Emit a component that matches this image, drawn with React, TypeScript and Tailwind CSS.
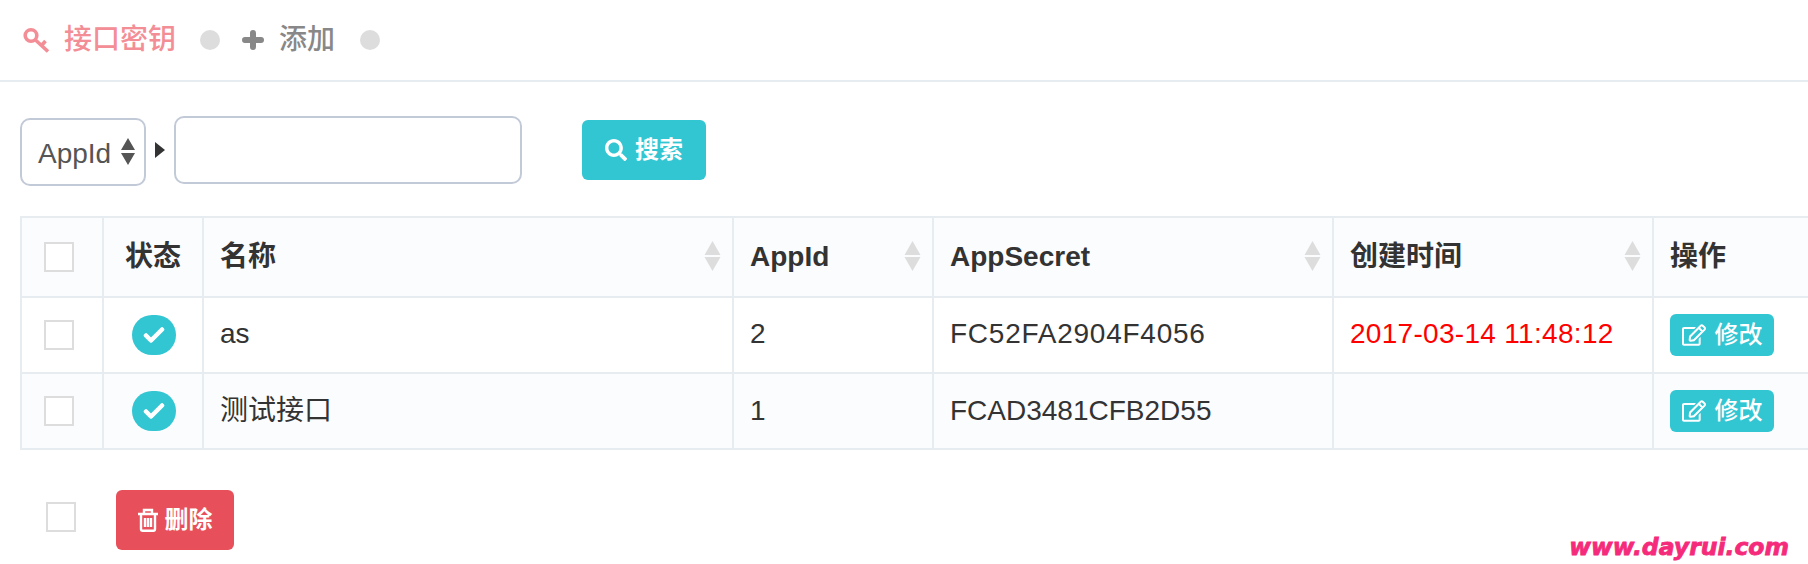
import { FaRegEdit, FaSearch } from 'react-icons/fa';

const font = 'font-["Liberation_Sans","Noto_Sans_CJK_SC",sans-serif]';

function Checkbox({ className = '' }: { className?: string }) {
  return <span className={`block h-[30px] w-[30px] border-2 border-[#dddddd] bg-white ${className}`} />;
}

function KeyIcon() {
  return (
    <svg width="28" height="26" viewBox="0 0 28 26" fill="none" stroke="#f38d96" strokeWidth="3.6">
      <circle cx="8" cy="8.5" r="5.8" />
      <path d="M12.5 13l12.5 11.5M18.5 18.5l4-4.5" />
    </svg>
  );
}

function PlusIcon() {
  return (
    <svg width="22" height="20" viewBox="0 0 22 20" className="ml-[22px]" fill="none" stroke="#888888" strokeWidth="6" strokeLinecap="round">
      <path d="M3 10h16M11 3v14" />
    </svg>
  );
}

function TrashIcon() {
  return (
    <svg width="20" height="24" viewBox="0 0 20 24" fill="none" stroke="white" strokeWidth="2.4">
      <path d="M0 6h20M6 6V2h8v4M3 6v15c0 1 .6 1.8 1.6 1.8h10.8c1 0 1.6-.8 1.6-1.8V6M7 10v9M10 10v9M13 10v9" />
    </svg>
  );
}

function SortIcon() {
  return (
    <svg width="17" height="30" viewBox="0 0 17 30" className="absolute right-[11px] top-[23px]" fill="#dddddd">
      <path d="M8.5 0l8 14H.5zM.5 16h16l-8 14z" />
    </svg>
  );
}

function StatusIcon() {
  return (
    <span className="mx-auto flex h-[40px] w-[44px] items-center justify-center rounded-full bg-[#32c5d2]">
      <svg width="22" height="18" viewBox="0 0 22 18" fill="none" stroke="white" strokeWidth="4.5" strokeLinecap="round" strokeLinejoin="round">
        <path d="M3 9.5l5 5 11-11" />
      </svg>
    </span>
  );
}

function EditButton() {
  return (
    <button className="flex h-[42px] w-[104px] items-center justify-center gap-[9px] rounded-[6px] bg-[#32c5d2] text-[24px] font-medium text-white">
      <FaRegEdit size={24} />
      修改
    </button>
  );
}

const cell = 'relative border-2 border-[#e7ecf1] pl-[16px] pr-[14px] align-middle';
const boxCell = 'relative border-2 border-[#e7ecf1] pl-[22px] align-middle';

export default function App() {
  return (
    <div className={`h-[564px] w-[1808px] overflow-hidden bg-white text-[#333333] ${font}`}>
      <div className="flex h-[82px] items-center border-b-2 border-[#e7ecf1] pl-[23px] text-[28px] font-medium">
        <KeyIcon />
        <span className="ml-[13px] text-[#f38d96]">接口密钥</span>
        <span className="ml-[24px] h-[20px] w-[20px] rounded-full bg-[#dddddd]" />
        <PlusIcon />
        <span className="ml-[15px] text-[#888888]">添加</span>
        <span className="ml-[25px] h-[20px] w-[20px] rounded-full bg-[#dddddd]" />
      </div>

      <div className="flex items-center pl-[20px] pt-[32px]">
        <div className="mt-[4px] flex h-[68px] w-[126px] items-center rounded-[10px] border-2 border-[#c2cad8] pl-[16px] text-[28px] text-[#555555]">
          <span className="pt-[4px]">AppId</span>
          <svg width="14" height="28" viewBox="0 0 14 28" className="ml-[10px]" fill="#555555">
            <path d="M7 0l7 12H0zM0 15h14L7 27z" />
          </svg>
        </div>
        <svg width="10" height="16" viewBox="0 0 10 16" className="ml-[9px]" fill="#333333">
          <path d="M0 0l10 8-10 8z" />
        </svg>
        <div className="ml-[9px] h-[68px] w-[348px] rounded-[10px] border-2 border-[#c2cad8]" />
        <button className="ml-[60px] flex h-[60px] w-[124px] items-center justify-center gap-[8px] rounded-[6px] bg-[#32c5d2] text-[24px] font-bold text-white">
          <FaSearch size={22} />
          搜索
        </button>
      </div>

      <div className="mt-[30px] pl-[20px]">
        <table className="w-[1832px] table-fixed border-collapse text-left text-[28px]">
          <colgroup>
            <col className="w-[82px]" />
            <col className="w-[100px]" />
            <col className="w-[530px]" />
            <col className="w-[200px]" />
            <col className="w-[400px]" />
            <col className="w-[320px]" />
            <col className="w-[200px]" />
          </colgroup>
          <thead>
            <tr className="h-[80px] bg-[#fbfcfd] font-bold">
              <th className={boxCell}>
                <Checkbox />
              </th>
              <th className="relative border-2 border-[#e7ecf1] text-center align-middle">状态</th>
              <th className={cell}>
                名称
                <SortIcon />
              </th>
              <th className={cell}>
                AppId
                <SortIcon />
              </th>
              <th className={cell}>
                AppSecret
                <SortIcon />
              </th>
              <th className={cell}>
                创建时间
                <SortIcon />
              </th>
              <th className={cell}>操作</th>
            </tr>
          </thead>
          <tbody>
            <tr className="h-[76px]">
              <td className={boxCell}>
                <Checkbox />
              </td>
              <td className={cell}>
                <StatusIcon />
              </td>
              <td className={`${cell} pb-[2px]`}>as</td>
              <td className={`${cell} pb-[2px]`}>2</td>
              <td className={`${cell} pb-[2px] tracking-[0.75px]`}>FC52FA2904F4056</td>
              <td className={`${cell} pb-[2px] tracking-[0.3px] text-[#ff0000]`}>2017-03-14 11:48:12</td>
              <td className={cell}>
                <EditButton />
              </td>
            </tr>
            <tr className="h-[76px] bg-[#fbfcfd]">
              <td className={boxCell}>
                <Checkbox />
              </td>
              <td className={cell}>
                <StatusIcon />
              </td>
              <td className={cell}>测试接口</td>
              <td className={cell}>1</td>
              <td className={cell}>FCAD3481CFB2D55</td>
              <td className={cell} />
              <td className={cell}>
                <EditButton />
              </td>
            </tr>
          </tbody>
        </table>
      </div>

      <div className="relative mt-[40px] flex items-center pl-[46px]">
        <Checkbox className="mb-[7px]" />
        <button className="ml-[40px] flex h-[60px] w-[118px] items-center justify-center gap-[7px] rounded-[6px] bg-[#e7505a] text-[24px] font-bold text-white">
          <TrashIcon />
          删除
        </button>
        <span className='absolute right-[19px] top-[46px] font-["DejaVu_Sans"] text-[23.5px] font-bold italic leading-none text-[#f52a7a] [-webkit-text-stroke:0.8px_#f52a7a]'>
          www.dayrui.com
        </span>
      </div>
    </div>
  );
}
